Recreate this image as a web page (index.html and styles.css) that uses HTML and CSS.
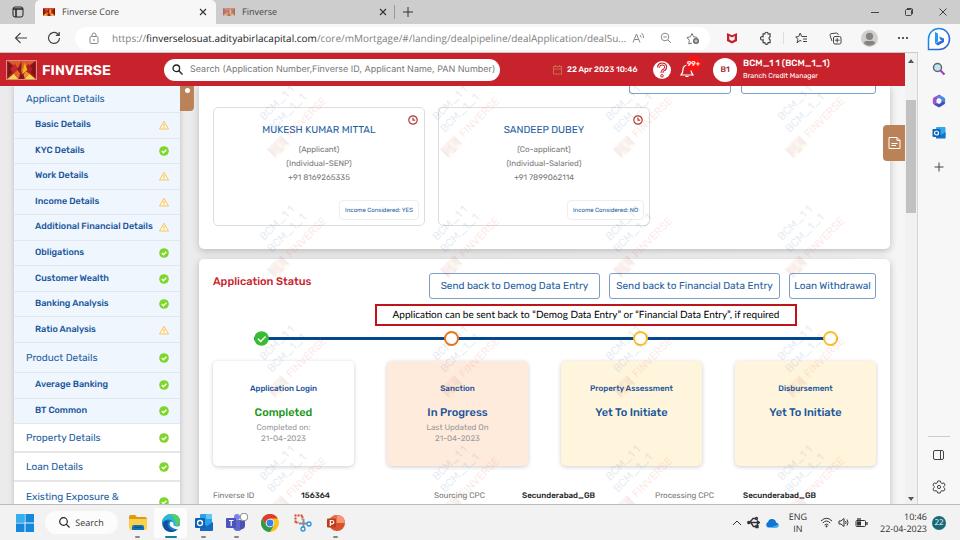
FILE: index.html
```html
<!DOCTYPE html>
<html lang="en">
<head>
<meta charset="utf-8">
<title>Finverse Core</title>
<link rel="stylesheet" href="styles.css">
</head>
<body>
<svg class="defs" aria-hidden="true">
  <symbol id="logo" viewBox="0 0 31 20">
    <rect width="31" height="20" fill="#a81c1d"/>
    <path d="M0 0H31L15.5 11z" fill="#e0592a"/>
    <path d="M0 0l8 9L0 18z" fill="#7c1518"/><path d="M31 0l-8 9 8 9z" fill="#7c1518"/>
    <path d="M8 3l5 7-6 5-4-6z" fill="#c4262b"/><path d="M23 3l-5 7 6 5 4-6z" fill="#b31f24"/>
    <path d="M15.5 0l-5 10 5 5z" fill="#8e1a1c"/><path d="M19 2l3 8-6 5z" fill="#f5b51e"/><path d="M19 2l-4 8 1 5z" fill="#d67b22"/>
    <path d="M0 20l7-6 5 6z" fill="#f8d548"/><path d="M31 20l-7-6-5 6z" fill="#f8d548"/>
    <path d="M12 20l3.500-7 4 7z" fill="#8b1618"/><path d="M7 14l4-4 3 4-2 6z" fill="#dd6a2a"/><path d="M24 14l-4-3-2 4 1 5z" fill="#ee8f33"/>
  </symbol>
  <symbol id="ok" viewBox="0 0 10 10"><circle cx="5" cy="5" r="4.800" fill="#7ed62b"/><path d="M2.800 5l1.600 1.700L7.400 3.700" fill="none" stroke="#fff" stroke-width="1.300"/></symbol>
  <symbol id="warn" viewBox="0 0 10 10"><path d="M5 1.200L9.500 9H.5z" fill="#fff6df" stroke="#f7c666" stroke-linejoin="round"/><path d="M5 3.800v2.700M5 7.200v1" stroke="#f3b94b" stroke-width="1"/></symbol>
  <symbol id="x" viewBox="0 0 10 10"><path d="M2 2l6 6M8 2l-6 6" stroke="#333" stroke-width="1.100"/></symbol>
  <symbol id="clock" viewBox="0 0 10 10"><circle cx="5" cy="5" r="4.200" fill="#fff" stroke="#b03a35" stroke-width="1.200"/><path d="M5 2.600V5.200H7.200" fill="none" stroke="#b03a35" stroke-width="1.200"/></symbol>
</svg>

<header class="tabs">
  <button class="tabs-menu" aria-label="Tab actions"><svg width="12" height="12" viewBox="0 0 12 12" fill="none" stroke="#222"><rect x="1" y="1" width="10" height="10" rx="2"/><path d="M1 3H11M4 3V11" stroke-width="1.500"/></svg></button>
  <div class="tab active"><svg class="fav"><use href="#logo"/></svg><span>Finverse Core</span><button aria-label="Close tab"><svg width="10" height="10"><use href="#x"/></svg></button></div>
  <div class="tab other"><svg class="fav"><use href="#logo"/></svg><span>Finverse</span><button aria-label="Close tab"><svg width="10" height="10"><use href="#x"/></svg></button></div>
  <i class="tab-rule"></i>
  <button class="new-tab" aria-label="New tab"><svg width="12" height="12" viewBox="0 0 12 12"><path d="M6 1V11M1 6H11" stroke="#333"/></svg></button>
  <div class="window-buttons">
    <button aria-label="Minimize"><svg width="10" height="10"><path d="M1 5.500H9" stroke="#444"/></svg></button>
    <button aria-label="Restore"><svg width="10" height="10" fill="none" stroke="#444"><rect x="1.500" y="2.500" width="6" height="6" rx="1"/><path d="M3 1.500H7.500Q8.500 1.500 8.500 3V7"/></svg></button>
    <button aria-label="Close window"><svg width="10" height="10"><path d="M1.500 1.500l7 7M8.500 1.500l-7 7" stroke="#444"/></svg></button>
  </div>
</header>

<div class="browser">
  <div class="browser-main">
    <nav class="toolbar" aria-label="Browser">
      <button class="nav-btn" aria-label="Back"><svg width="14" height="14" viewBox="0 0 14 14" fill="none" stroke="#444" stroke-width="1.100"><path d="M13 7H1.500M6.500 2L1.500 7L6.500 12"/></svg></button>
      <button class="nav-btn" aria-label="Reload"><svg width="14" height="14" viewBox="0 0 14 14" fill="none" stroke="#444" stroke-width="1.200"><path d="M12.500 7A5.500 5.500 0 1 1 10.500 2.700L12 4M12.200 1V4.300H8.800"/></svg></button>
      <div class="address">
        <svg width="10" height="13" viewBox="0 0 10 13" fill="none" stroke="#888"><rect x="1" y="4.500" width="8" height="7" rx="1.200"/><path d="M3 4.500V3A2 2 0 0 1 7 3V4.500"/><circle cx="5" cy="8" r=".5"/></svg>
        <span class="url">https://<b>finverselosuat.adityabirlacapital.com</b>/core/mMortgage/#/landing/dealpipeline/dealApplication/dealSu...</span>
        <button aria-label="Read aloud"><svg width="14" height="12" viewBox="0 0 14 12" fill="none" stroke="#888"><path d="M1 10.500L4.500 2L8 10.500M2.300 7.500H6.700M8 3Q9 4 9 5.500M9.500 1Q12 3 11.500 6"/></svg></button>
        <button aria-label="Zoom out"><svg width="12" height="12" viewBox="0 0 12 12" fill="none" stroke="#888"><circle cx="5" cy="5" r="3.800"/><path d="M8 8l3 3M3.300 5h3.400"/></svg></button>
        <button aria-label="Add favourite"><svg width="14" height="13" viewBox="0 0 14 13" fill="none" stroke="#777"><path d="M6 11L2.800 12l.5-3.700L1 5.500l3.500-.7L6 1.500l1.700 3.300 3.600.6"/><circle cx="10" cy="9" r="3" fill="#666" stroke="none"/><path d="M10 7.300v3.400M8.300 9h3.400" stroke="#fff" stroke-width=".8"/></svg></button>
      </div>
      <div class="extensions">
        <button aria-label="Web protection"><svg width="12" height="12" viewBox="0 0 12 12"><path d="M1 1l5 2.200L11 1v8l-5 2.500L1 9zM3.300 4v3.600L6 9l2.700-1.400V4L6 5.500z" fill="#c9202f" fill-rule="evenodd"/></svg></button>
        <button aria-label="Extensions"><svg width="14" height="14" viewBox="0 0 12 12" fill="none" stroke="#444"><path d="M3.500 2.500H5A1.400 1.400 0 0 1 7.800 2.500H9.500V5A1.300 1.300 0 0 0 9.500 7.500V10H7.800A1.400 1.400 0 0 1 5 10H3.500V7.600A1.500 1.500 0 1 1 3.500 5z"/></svg></button>
        <i></i>
        <button aria-label="Favourites"><svg width="13" height="12" viewBox="0 0 13 12" fill="none" stroke="#444"><path d="M6.500 9L5 8.500 2 10.800 3 7.300.7 5l3-.4L5.200 1 6.700 4.500H12M8 7h4M8 9.500h4"/></svg></button>
        <button aria-label="Collections"><svg width="13" height="13" viewBox="0 0 13 13" fill="none" stroke="#444"><rect x="4.500" y="4.500" width="7.500" height="7.500" rx="1.500"/><path d="M8.200 6v4.500M6 8.200h4.500M3 9L1 3.500Q.8 2 2 1.700L7.500 1Q9 1 9.300 3"/></svg></button>
        <button aria-label="Profile"><svg width="17" height="17" viewBox="0 0 17 17"><circle cx="8.500" cy="8.500" r="8.500" fill="#d0cdca"/><circle cx="8.500" cy="6.300" r="3.600" fill="#858380"/><path d="M3 13.500Q3 11 5 11h7q2 0 2 2.500-5.500 4.500-11 0z" fill="#858380"/></svg></button>
        <button aria-label="More"><svg width="12" height="4"><g fill="#333"><circle cx="2" cy="2" r="1.100"/><circle cx="6" cy="2" r="1.100"/><circle cx="10" cy="2" r="1.100"/></g></svg></button>
      </div>
    </nav>

    <div class="viewport">
      <div class="page">
        <header class="app-bar">
          <svg class="brand-mark"><use href="#logo"/></svg>
          <strong class="brand">FINVERSE</strong>
          <label class="search"><svg width="11" height="11" viewBox="0 0 11 11" fill="none" stroke="#222" stroke-width="1.300"><circle cx="4.300" cy="4.300" r="3.300"/><path d="M6.800 6.800L10.500 10.500"/></svg><input type="text" aria-label="Search" placeholder="Search (Application Number,Finverse ID, Applicant Name, PAN Number)"></label>
          <div class="session">
            <time><svg width="9" height="10" viewBox="0 0 9 10" fill="none" stroke="#c8704c"><rect x=".5" y="1.500" width="8" height="7.500"/><path d="M.5 4h8M2.500 0v2M6.500 0v2"/></svg>22 Apr 2023 10:46</time>
            <button class="help" aria-label="Help"><svg width="18" height="18" viewBox="0 0 18 18"><circle cx="9" cy="9" r="9" fill="#fff"/><path d="M5.500 6.600Q5.600 3 9.200 3T12.700 6.200Q12.700 8 10.500 9 9 9.800 9 12" fill="none" stroke="#c8232c" stroke-width="3"/><path d="M5.500 6.600Q5.600 3 9.200 3T12.700 6.200Q12.700 8 10.500 9 9 9.800 9 12" fill="none" stroke="#fff" stroke-width="1"/><circle cx="9" cy="14.800" r="1.300" fill="none" stroke="#c8232c"/></svg></button>
            <button class="bell" aria-label="Notifications"><svg width="14" height="16" viewBox="0 0 14 16" fill="none" stroke="#fff" stroke-width="1.200"><path d="M1 13Q3 11 3 7.500T7 3Q11 4 11 7.500T13 13zM5.500 14.500h3"/></svg><span>99+</span></button>
            <span class="avatar">B1</span>
            <div class="user"><strong>BCM_1 1 (BCM_1_1)</strong><span>Branch Credit Manager</span></div>
          </div>
        </header>

        <div class="content">
          <aside class="side">
            <ul class="menu">
              <li class="group first"><a href="#">Applicant Details</a></li>
              <li><ul class="sub nine">
                <li><a href="#">Basic Details</a><svg><use href="#warn"/></svg></li>
                <li><a href="#">KYC Details</a><svg><use href="#ok"/></svg></li>
                <li><a href="#">Work Details</a><svg><use href="#warn"/></svg></li>
                <li><a href="#">Income Details</a><svg><use href="#warn"/></svg></li>
                <li><a href="#">Additional Financial Details</a><svg><use href="#warn"/></svg></li>
                <li><a href="#">Obligations</a><svg><use href="#ok"/></svg></li>
                <li><a href="#">Customer Wealth</a><svg><use href="#ok"/></svg></li>
                <li><a href="#">Banking Analysis</a><svg><use href="#ok"/></svg></li>
                <li><a href="#">Ratio Analysis</a><svg><use href="#warn"/></svg></li>
              </ul></li>
              <li class="group"><a href="#">Product Details</a><svg><use href="#ok"/></svg></li>
              <li><ul class="sub two">
                <li><a href="#">Average Banking</a><svg><use href="#ok"/></svg></li>
                <li><a href="#">BT Common</a><svg><use href="#ok"/></svg></li>
              </ul></li>
              <li class="group plain"><a href="#">Property Details</a><svg><use href="#ok"/></svg></li>
              <li class="group plain"><a href="#">Loan Details</a><svg><use href="#ok"/></svg></li>
              <li class="group plain tall"><a href="#">Existing Exposure &amp;</a><svg><use href="#ok"/></svg></li>
            </ul>
            <button class="side-toggle" aria-label="Collapse menu"></button>
          </aside>

          <main class="panels">
            <section class="panel applicants">
              <div class="cut-row"><button class="outline"></button><button class="outline wide"></button></div>
              <div class="people">
                <article class="person">
                  <svg class="pending"><use href="#clock"/></svg>
                  <h3>MUKESH KUMAR MITTAL</h3>
                  <p>(Applicant)</p><p>(Individual-SENP)</p><p>+91 8169265335</p>
                  <span class="income">Income Considered: YES</span>
                </article>
                <article class="person">
                  <svg class="pending"><use href="#clock"/></svg>
                  <h3>SANDEEP DUBEY</h3>
                  <p>(Co-applicant)</p><p>(Individual-Salaried)</p><p>+91 7899062114</p>
                  <span class="income">Income Considered: NO</span>
                </article>
              </div>
            </section>

            <section class="panel status">
              <div class="status-head">
                <h2>Application Status</h2>
                <button class="outline large">Send back to Demog Data Entry</button>
                <button class="outline large">Send back to Financial Data Entry</button>
                <button class="outline small">Loan Withdrawal</button>
              </div>
              <p class="note">Application can be sent back to “Demog Data Entry” or “Financial Data Entry”, if required</p>
              <div class="steps">
                <svg class="done" width="15" height="15" viewBox="0 0 15 15"><circle cx="7.500" cy="7.500" r="7.300" fill="#3abb34"/><path d="M4 7.700l2.700 2.700L11.500 5.500" fill="none" stroke="#fff" stroke-width="1.400"/></svg>
                <i class="step now"></i><i class="step"></i><i class="step"></i>
              </div>
              <div class="stages">
                <article class="stage"><h3>Application Login</h3><strong class="green">Completed</strong><p>Completed on:<br>21-04-2023</p></article>
                <article class="stage peach"><h3>Sanction</h3><strong>In Progress</strong><p>Last Updated On<br>21-04-2023</p></article>
                <article class="stage cream"><h3>Property Assessment</h3><strong>Yet To Initiate</strong></article>
                <article class="stage cream"><h3>Disbursement</h3><strong>Yet To Initiate</strong></article>
              </div>
              <dl class="facts">
                <div><dt>Finverse ID</dt><dd>156364</dd></div>
                <div><dt>Sourcing CPC</dt><dd>Secunderabad_GB</dd></div>
                <div><dt>Processing CPC</dt><dd>Secunderabad_GB</dd></div>
              </dl>
            </section>

            <div class="watermarks" aria-hidden="true"></div>
            <template id="watermark">
              <svg viewBox="0 0 173 120" width="173" height="120">
                <g transform="translate(65 35) rotate(-45)">
                  <text x="0" y="0" class="wm-blue">BCM_1 1</text>
                  <text x="-3" y="14" class="wm-blue">BCM_1_1</text>
                  <use href="#logo" x="-18" y="22" width="20" height="13" class="wm-logo"/>
                  <text x="7" y="31" class="wm-red">FINVERSE</text>
                </g>
              </svg>
            </template>
          </main>
          <button class="notes" aria-label="Notes"><svg width="13" height="14" viewBox="0 0 13 14" fill="none" stroke="#fff"><path d="M1 1.500H9L12 4.500V12.500H1zM9 1.500V4.500H12M3.500 7.500H9.500M3.500 9.500H8"/></svg></button>
        </div>
      </div>
      <div class="scroll" aria-hidden="true"><svg width="6" height="4"><path d="M0 4L3 0L6 4z" fill="#555"/></svg><i></i><svg width="6" height="4"><path d="M0 0L3 4L6 0z" fill="#555"/></svg></div>
    </div>
  </div>

  <aside class="edge">
    <button class="bing" aria-label="Bing"><svg width="24" height="24" viewBox="0 0 24 24"><defs><linearGradient id="bg" x2="1" y2="1"><stop stop-color="#1b9be8"/><stop offset="1" stop-color="#3553d8"/></linearGradient></defs><path d="M1.500 22.500V12A10.500 10.500 0 1 1 12 22.500z" fill="#fff" stroke="url(#bg)" stroke-width="1.500"/><path d="M8 5l3 1.500v8L8 16.500z" fill="#269be9"/><path d="M8 16.500l3 2 6-3.500v-3.500L12 9.500l1.200 3 1.800.8z" fill="url(#bg)"/></svg></button>
    <button aria-label="Search"><svg width="14" height="14" viewBox="0 0 14 14"><path d="M8 8l4.500 4.500" stroke="#a43fd8" stroke-width="2.200"/><circle cx="5.500" cy="5.500" r="4" fill="#bfe4f6" stroke="#666" stroke-width="1.500"/></svg></button>
    <button aria-label="Microsoft 365"><svg width="14" height="14" viewBox="0 0 14 14"><path d="M7 .7L2 3.200Q.8 4 .8 5.500v3Q.8 10 2 10.600L4.500 12V6.500Q4.500 5 6 4.300L9 2.800V1.700Q8 .4 7 .7z" fill="#9a55d0"/><path d="M7 .7l4.800 2.500Q13.200 4 13.200 5.500v3L9.500 9V6.500Q9.500 5 8 4.500L5.500 4 5.700 1.400z" fill="#4d8be0"/><path d="M13.200 8.500q0 1.300-1.200 2l-4 2.500q-1 .6-2 0l-4-2.400 3-1.600 2 1 2.500-1.500V7z" fill="#4550b8"/><circle cx="7" cy="7" r="2.200" fill="#f7f7f7"/></svg></button>
    <button aria-label="Outlook"><svg width="14" height="14" viewBox="0 0 14 14"><rect x="4" y="1" width="9.500" height="11" rx="1" fill="#35a8ea"/><path d="M4 7l5 2 4.500-3v6.500H4z" fill="#1473ca"/><rect x=".5" y="3" width="8" height="8" rx="1" fill="#0b64b8"/><circle cx="4.500" cy="7" r="2" fill="none" stroke="#fff" stroke-width="1.200"/></svg></button>
    <button class="edge-add" aria-label="Add"><svg width="10" height="10"><path d="M5 .5V9.500M.5 5H9.500" stroke="#444"/></svg></button>
    <i class="edge-rule"></i>
    <button aria-label="Hide sidebar"><svg width="12" height="10" fill="none" stroke="#444"><rect x=".5" y=".5" width="10" height="9" rx="1.500"/><path d="M7.500 .5v9"/></svg></button>
    <button aria-label="Settings"><svg width="14" height="14" viewBox="0 0 14 14" fill="none" stroke="#444"><path d="M5.700 1h2.600l.5 1.800 1.200.7 1.800-.6 1.300 2.200L11.700 6.500v1l1.400 1.400-1.300 2.200-1.800-.5-1.200.7-.5 1.700H5.700l-.5-1.700-1.200-.7-1.800.5L.9 8.900l1.400-1.400v-1L.9 5.100l1.300-2.200 1.800.6 1.200-.7z"/><circle cx="7" cy="7" r="1.600"/></svg></button>
  </aside>
</div>

<footer class="taskbar">
  <button class="start" aria-label="Start"><svg width="18" height="18" viewBox="0 0 18 18" fill="#1488dc"><path d="M0 0h8.500v8.500H0zM9.500 0H18v8.500H9.500zM0 9.500h8.500V18H0zM9.500 9.500H18V18H9.500z"/><path d="M0 0h8.500v8.500H0z" fill="#38aeee"/></svg></button>
  <button class="task-search"><svg width="11" height="11" viewBox="0 0 11 11" fill="none" stroke="#222" stroke-width="1.200"><circle cx="4.500" cy="4.500" r="3.800"/><path d="M7.200 7.200L10.500 10.500"/></svg>Search</button>
  <div class="apps">
    <button class="open" aria-label="File Explorer"><svg width="20" height="20" viewBox="0 0 20 20"><path d="M1 4Q1 2 2.500 2H7l2 2h8q2 0 2 2v3H1z" fill="#e09a12"/><path d="M1 6h18v9q0 2-2 2H3q-2 0-2-2z" fill="#fcd04e"/><path d="M4 17v-3q0-2 2-2h8q2 0 2 2v3z" fill="#1272b8"/><path d="M6.500 14.500h7" stroke="#0a4c86"/></svg></button>
    <button class="open current" aria-label="Edge"><svg width="20" height="20" viewBox="0 0 20 20"><circle cx="10" cy="10" r="9" fill="#1579c8"/><path d="M1 9.500Q2 1 10.500 1T19 9q0 4-4.500 4Q11 13 12 10.500 12 7 8 6.500T1 9.500z" fill="#2fb9cf"/><path d="M9 1.200Q19 0 19 9q0 4-4.500 4 2-6-5.500-11.800z" fill="#55cf63"/><path d="M8 8q-3 3 0 7t9 1q-3 3.500-7 3Q2 18 2 11q2-4 6-3z" fill="#0f4f9e"/><path d="M9.500 8.500Q7 12 11 14.500t6.500 1.200l1.500.3 1-4q-2 1.700-5 1.300-3.500-.3-2.500-2.300.2-2-3-2.500z" fill="#f4f8fa"/></svg></button>
    <button class="open" aria-label="Outlook"><svg width="20" height="20" viewBox="0 0 20 20"><rect x="6" y="1" width="12" height="15" rx="1" fill="#2aa0e8"/><path d="M12 1h6v5h-6z" fill="#5bc8f5"/><path d="M6 9l7 4 6-4v8q0 1-1 1H6z" fill="#1568bf"/><rect x="1" y="5" width="10" height="10" rx="1" fill="#0d62b6"/><circle cx="6" cy="10" r="2.500" fill="none" stroke="#fff" stroke-width="1.300"/></svg></button>
    <button class="open" aria-label="Teams"><svg width="22" height="20" viewBox="0 0 22 20"><circle cx="11" cy="4" r="3" fill="#7b83eb"/><path d="M7 7h9v7q0 4-4 4-5 0-5-5z" fill="#6067cc"/><path d="M14 8h5v5q-1 4-5 3z" fill="#4b52b4"/><rect x="0" y="5" width="10" height="10" rx="1" fill="#4b53bc"/><path d="M3 7.500h4.500M5.200 7.500V13" stroke="#fff" stroke-width="1.200"/><circle cx="18" cy="4" r="3.800" fill="#fff" stroke="#888"/></svg></button>
    <button aria-label="Chrome"><svg width="18" height="18" viewBox="0 0 18 18"><circle cx="9" cy="9" r="9" fill="#f6c21c"/><path d="M1.200 4.500A9 9 0 0 1 16.800 4.500H9L5.100 11.200z" fill="#df3b30"/><path d="M1.200 4.500A9 9 0 0 0 9 18l3.900-6.700H5.100z" fill="#2c9b4b"/><circle cx="9" cy="9" r="4.300" fill="#fff"/><circle cx="9" cy="9" r="3.400" fill="#3d7fe8"/></svg></button>
    <button aria-label="Snipping Tool"><svg width="18" height="18" viewBox="0 0 18 18" fill="none"><path d="M1.500 8.500V1.500H8.500V6M1.500 8.500H5" stroke="#d8472c" stroke-width="2" stroke-dasharray="2 1"/><path d="M9.500 5v8M5 9.500h8" stroke="#8b8f94" stroke-width="2"/><circle cx="15" cy="10" r="2" stroke="#2794dc" stroke-width="1.300"/><circle cx="9" cy="15" r="2" stroke="#2794dc" stroke-width="1.300"/></svg></button>
    <button class="open" aria-label="PowerPoint"><svg width="18" height="18" viewBox="0 0 18 18"><circle cx="10" cy="9" r="8" fill="#d9512c"/><path d="M10 1a8 8 0 0 1 8 8h-8z" fill="#f79572"/><path d="M10 1v8H2a8 8 0 0 1 8-8z" fill="#ea6d4a"/><rect y="4.500" width="9" height="9" rx="1" fill="#bd3c1d"/><path d="M3.300 12V6.500h2q1.500.2 1.500 1.700T5.300 9.900h-2" stroke="#fff" fill="none" stroke-width="1.200"/></svg></button>
  </div>
  <div class="tray">
    <button aria-label="Hidden icons"><svg width="10" height="6" fill="none" stroke="#333"><path d="M1 5l4-4 4 4"/></svg></button>
    <svg width="13" height="13" viewBox="0 0 13 13" fill="none" stroke="#333" stroke-width="1.300"><path d="M1 6.500h11M3 6l3-3.500h3M4 7l2.500 3.500H9"/><circle cx="9.500" cy="2.500" r="1"/><circle cx="1.800" cy="6.500" r="1.100" fill="#333"/><path d="M9 9.500h2v2H9zM10.500 5l2 1.500-2 1.500z" fill="#333"/></svg>
    <svg width="14" height="10" viewBox="0 0 14 10"><path d="M3 9.500A3 3 0 0 1 3 4Q4 .5 7.500 1T11 4.500Q14 5 13.500 8 13 9.500 11 9.500z" fill="#0f77d3"/><path d="M6 9.500L13.300 6.500Q14 9.500 11 9.500z" fill="#3cb4f2"/></svg>
    <span class="lang">ENG<br>IN</span>
    <svg width="13" height="11" viewBox="0 0 13 11" fill="none" stroke="#333"><path d="M1 4Q6.500-1.500 12 4M2.800 6Q6.500 2 10.200 6M4.600 8Q6.500 6 8.400 8"/><circle cx="6.500" cy="9.300" r=".6" fill="#333"/></svg>
    <svg width="12" height="11" viewBox="0 0 12 11" fill="none" stroke="#333"><path d="M1 4h2l3-2.500v8L3 7H1zM7.500 4q1 1.500 0 3M9 2.500Q11 5.500 9 8.500"/></svg>
    <svg width="13" height="11" viewBox="0 0 13 11" fill="none" stroke="#333"><rect x="1" y="3.500" width="9.500" height="6" rx="1"/><path d="M12 5v3M3 1v4M5 1v4" stroke-width="1.300"/><path d="M2 5h4v3.500H2z" fill="#333" stroke="none"/></svg>
    <time class="clock">10:46<br>22-04-2023</time>
    <span class="count">22</span>
  </div>
</footer>
<script src="script.js"></script>
</body>
</html>
```
FILE: styles.css
```css
* { box-sizing: border-box; }
body {
  margin: 0; height: 100vh; display: flex; flex-direction: column; overflow: hidden;
  font-family: Rubik, Roboto, sans-serif; font-size: 8px; line-height: 12px; color: #777;
  text-rendering: geometricPrecision;
}
button { padding: 0; border: 0; background: none; font: inherit; color: inherit; display: flex; align-items: center; justify-content: center; }
button, input { text-rendering: inherit; }
ul, dl, dd, p, h2, h3 { margin: 0; padding: 0; }
ul { list-style: none; }
a { color: inherit; text-decoration: none; }
svg { flex: none; display: block; }
.defs { position: absolute; width: 0; height: 0; }

.tabs { display: flex; align-items: center; height: 24px; flex: none; background: #cdcdcd; font: 9px/12px "Open Sans", sans-serif; color: #444; }
.tabs-menu { width: 35px; }
.tab { display: flex; align-items: center; gap: 7px; height: 24px; padding: 0 8px; }
.tab span { flex: 1; }
.tab.active { width: 181px; background: #f7f7f7; border-radius: 5px 5px 0 0; }
.tab.other { width: 178px; padding-left: 7px; padding-right: 6px; }
.tab.other .fav { opacity: .5; }
.fav { width: 12px; height: 8px; }
.tab-rule { width: 1px; height: 14px; background: #999; }
.new-tab { width: 26px; }
.window-buttons { display: flex; margin-left: auto; }
.window-buttons button { width: 34px; }

.browser { flex: 1; min-height: 0; display: flex; background: #f7f7f7; }
.browser-main { flex: 1; min-width: 0; display: flex; flex-direction: column; }
.toolbar { display: flex; align-items: center; height: 29px; flex: none; padding-left: 4px; border-bottom: 1px solid #c8c8c8; }
.nav-btn { width: 33px; }
.address { flex: 1; min-width: 0; display: flex; align-items: center; height: 23px; margin: 0 5px; padding: 0 4px 0 14px; border-radius: 12px; background: #fff; }
.url { flex: 1; min-width: 0; margin-left: 13px; white-space: nowrap; font: 10px/14px "Open Sans", sans-serif; color: #808080; }
.url b { font-weight: 400; color: #222; }
.address button { width: 27px; }
.extensions { display: flex; align-items: center; margin-right: -2px; }
.extensions button { width: 34px; }
.extensions i { width: 1px; height: 12px; background: #ddd; }

.viewport { flex: 1; min-height: 0; display: flex; }
.page { flex: 1; min-width: 0; display: flex; flex-direction: column; }
.app-bar { display: flex; align-items: center; height: 33px; flex: none; padding-left: 6px; background: #c8232c; color: #fff; }
.brand-mark { width: 31px; height: 20px; border: 1px solid #d98c86; }
.brand { width: 127px; padding: 3px 0 0 5px; font-size: 14px; font-weight: 600; }
.search { display: flex; align-items: center; width: 336px; height: 22px; padding-left: 8px; gap: 7px; border-radius: 11px; background: #fff; }
.search input { flex: 1; min-width: 0; padding: 0; border: 0; background: none; outline: 0; font: 9px/14px Inter, sans-serif; }
.search input::placeholder { color: #777; }
.session { display: flex; align-items: center; margin-left: auto; width: 352px; }
.session time { display: flex; align-items: center; gap: 5px; width: 100px; font-weight: 500; white-space: nowrap; }
.bell { position: relative; margin-left: 9px; }
.bell span { position: absolute; left: 6px; top: -6px; width: 15px; border-radius: 8px; background: #f11; font-size: 7px; line-height: 15px; font-weight: 600; }
.avatar { width: 24px; margin-left: 19px; border-radius: 12px; background: #fff; color: #a8232a; line-height: 24px; text-align: center; font-weight: 500; }
.user { margin-left: 6px; display: flex; flex-direction: column; font-size: 7px; }
.user strong { font-size: 9px; font-weight: 500; }

.content { position: relative; flex: 1; min-height: 0; display: flex; overflow: hidden; padding: 0 14px; background: linear-gradient(90deg, #ebebeb, #ececec 50%, #f5f5f5); }
.side { display: flex; align-items: flex-start; width: 180px; flex: none; }
.menu { flex: 1; background: #eff6fe; color: #2460a0; box-shadow: 0 0 5px #bbb; }
.menu svg { width: 10px; height: 10px; }
.group, .sub li { display: flex; align-items: center; justify-content: space-between; padding-right: 11px; border-bottom: 1px solid #e2e8ef; }
.group { height: 30px; padding-left: 12px; font-size: 10px; }
.group.first { height: 27px; }
.group.plain { height: 29px; background: #fff; border-bottom: 2px solid #e6e6e6; }
.group.tall { height: 42px; align-items: flex-start; padding-top: 9px; }
.group.tall svg { margin-top: 6px; }
.sub { display: grid; grid-auto-rows: 1fr; font-size: 9px; font-weight: 500; color: #17559b; }
.sub li { padding-left: 21px; }
.nine { height: 230px; }
.two { height: 51px; }
.side-toggle { align-items: flex-start; width: 14px; height: 25px; background: #bb8258; border-radius: 0 0 4px 0; }
.side-toggle::before { content: ""; width: 5px; height: 5px; margin-top: 2px; border-radius: 3px; background: #fff; }

.panels { position: relative; flex: 1; min-width: 0; margin: 0 1px 0 5px; display: flex; flex-direction: column; gap: 10px; height: 440px; }
.panel { padding: 0 14px; background: #fff; border-radius: 5px; box-shadow: 0 2px 7px #bbb; }
.applicants { height: 163px; border-radius: 0 0 5px 5px; }
.cut-row { display: flex; justify-content: flex-end; align-items: flex-end; gap: 10px; height: 8px; overflow: hidden; }
.outline { flex: none; height: 26px; padding: 0 9px; border: 1px solid #7c9ec8; border-radius: 3px; background: #fff; color: #2460a0; font-size: 10px; white-space: nowrap; }
.cut-row .outline { width: 102px; }
.cut-row .wide { width: 135px; }
.people { display: flex; gap: 13px; margin-top: 13px; }
.person { position: relative; flex: 0 0 212px; height: 119px; padding-top: 15px; border: 1px solid #ddd; border-radius: 5px; text-align: center; line-height: 14px; }
.person h3 { margin-bottom: 6px; font-size: 10px; font-weight: 400; color: #2460a0; }
.pending { position: absolute; top: 7px; right: 6px; width: 10px; height: 10px; }
.income { position: absolute; right: 5px; bottom: 5px; padding: 2px 5px; border: 1px solid #eee; border-radius: 4px; font-size: 6px; color: #2460a0; }

.status { flex: 1; padding-top: 14px; }
.status-head { display: flex; align-items: center; gap: 9px; }
.status-head h2 { flex: 1; font-size: 11px; font-weight: 500; color: #c8232c; margin-bottom: 9px; }
.large { width: 171px; }
.small { width: 87px; padding: 0; }
.note { position: relative; z-index: 1; width: 422px; margin: 5px 0 0 162px; border: 2px solid #c0141c; background: #fff; color: #000; font: 10px/18px Lato, sans-serif; text-align: center; white-space: nowrap; }
.steps { display: flex; justify-content: space-between; align-items: center; height: 15px; margin: 5px 38px 0 41px; background: linear-gradient(#04478e, #04478e) center / 100% 3px no-repeat; }
.step { width: 15px; height: 15px; border: 2px solid #fcbe25; border-radius: 8px; background: #fff; }
.step.now { border-color: #ea7517; }
.stages { display: grid; grid-template-columns: repeat(4, 1fr); gap: 33px; margin-top: 15px; }
.stage { height: 105px; padding-top: 22px; border-radius: 5px; background: #fff; box-shadow: 0 1px 4px #ccc; text-align: center; color: #999; }
.stage h3 { font-size: 8px; font-weight: 500; color: #17559b; }
.stage strong { display: block; margin: 11px 0 2px; font-size: 11px; line-height: 14px; font-weight: 500; color: #17559b; }
.stage .green { color: #179616; }
.stage p { line-height: 11px; }
.peach { background: #ffebdc; }
.cream { background: #fff5dc; }
.facts { display: grid; grid-template-columns: repeat(3, 1fr); margin-top: 24px; }
.facts div { display: flex; }
.facts dt { width: 88px; }
.facts dd { color: #222; font-weight: 500; }

.watermarks { position: absolute; inset: 0; display: grid; grid-template-columns: repeat(4, 1fr); grid-auto-rows: 120px; pointer-events: none; opacity: .12; }
.watermarks svg { width: 100%; overflow: visible; }
.wm-blue { font-size: 11px; fill: #3568a8; }
.wm-red { font-size: 11px; fill: #e8554f; }
.wm-logo { opacity: .6; }
.notes { position: absolute; right: 0; top: 39px; width: 22px; height: 36px; border-radius: 4px 0 0 4px; background: #bb8258; }

.scroll { width: 13px; display: flex; flex-direction: column; align-items: center; padding: 6px 1px 3px; background: #f1f1f1; border-right: 1px solid #d5d5d5; }
.scroll i { width: 10px; height: 113px; margin: 37px 0 auto; background: #c1c1c1; }

.edge { display: flex; flex-direction: column; align-items: center; width: 42px; flex: none; padding-bottom: 1px; }
.edge button { height: 32px; }
.edge .bing { height: 29px; }
.edge .edge-add { height: 36px; }
.edge-rule { width: 22px; height: 1px; margin: auto 0 2px; background: #ccc; }

.taskbar { display: flex; align-items: center; height: 36px; flex: none; padding: 0 14px 0 16px; border-top: 1px solid #bbb; background: #f2f2f2; font: 9px/12px "Open Sans", sans-serif; color: #333; }
.task-search { gap: 5px; width: 73px; height: 23px; margin: 0 3px 0 11px; border-radius: 12px; background: #fcfcfc; }
.apps { display: flex; }
.apps button { position: relative; width: 33px; height: 30px; }
.apps .current { background: #fcfcfc; border-radius: 3px; }
.open::after { content: ""; position: absolute; bottom: 0; width: 5px; height: 2px; border-radius: 1px; background: #888; }
.current::after { width: 12px; background: #168090; }
.tray { display: flex; align-items: center; gap: 5px; margin-left: auto; }
.lang { width: 28px; margin-right: 3px; text-align: center; }
.clock { width: 54px; text-align: right; white-space: nowrap; }
.count { width: 14px; border-radius: 7px; background: #17697a; color: #fff; font-size: 8px; line-height: 14px; text-align: center; }
```
FILE: script.js
```js
// Tile the user watermark over the panels.
const layer = document.querySelector(".watermarks");
const tile = document.getElementById("watermark");
for (let i = 0; i < 16; i++) layer.append(tile.content.cloneNode(true));
```
